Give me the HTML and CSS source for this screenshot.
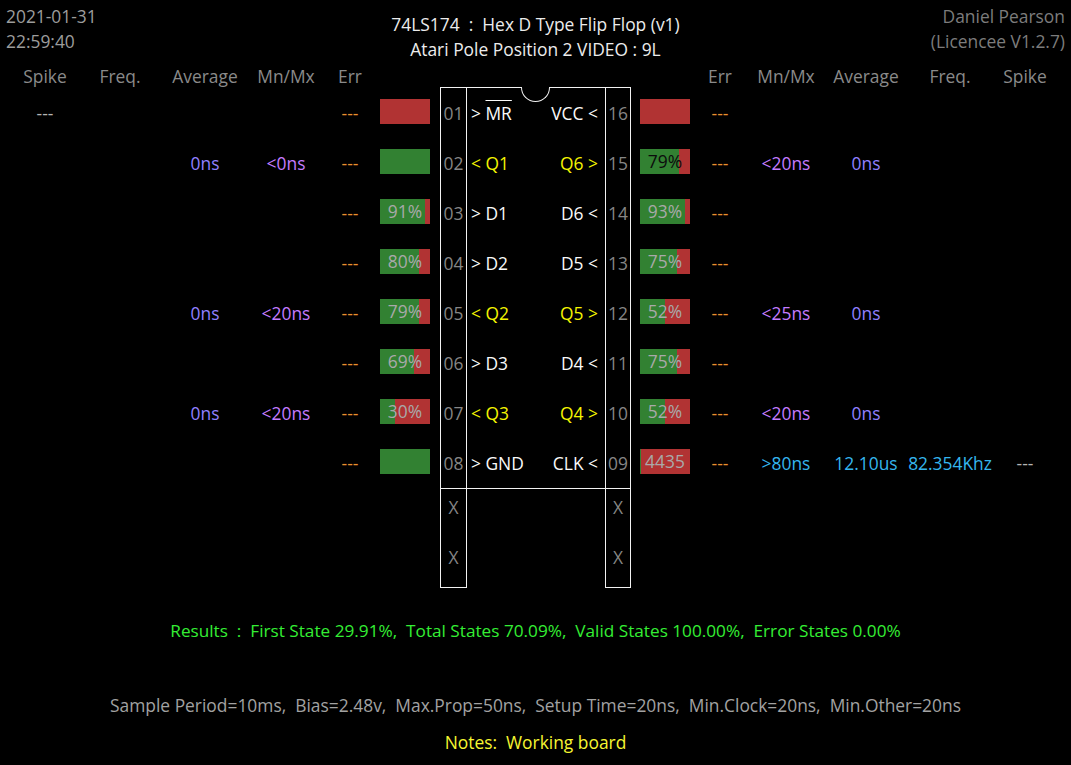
FILE: index.html
```html
<!DOCTYPE html>
<html>
<head>
<meta charset="utf-8">
<title>74LS174 Hex D Type Flip Flop</title>
<link rel="stylesheet" href="styles.css">
</head>
<body>
<div class="screen">
  <header class="top">
    <div class="stamp">2021-01-31<br>22:59:40</div>
    <div class="title">74LS174&nbsp; :&nbsp; Hex D Type Flip Flop (v1)<br>Atari Pole Position 2 VIDEO : 9L</div>
    <div class="owner">Daniel Pearson<br>(Licencee V1.2.7)</div>
  </header>

  <main class="board">
    <section class="side side-left">
      <div class="row head"><span>Spike</span><span>Freq.</span><span>Average</span><span>Mn/Mx</span><span class="err">Err</span><span></span></div>
      <div class="row"><span class="dim">---</span><span></span><span></span><span></span><span class="err warn">---</span><div class="bar"><span class="fill" style="width:0%"></span><span class="pct"></span></div></div>
      <div class="row"><span></span><span></span><span class="ns">0ns</span><span class="mm">&lt;0ns</span><span class="err warn">---</span><div class="bar"><span class="fill" style="width:100%"></span><span class="pct"></span></div></div>
      <div class="row"><span></span><span></span><span></span><span></span><span class="err warn">---</span><div class="bar"><span class="fill" style="width:90%"></span><span class="pct">91%</span></div></div>
      <div class="row"><span></span><span></span><span></span><span></span><span class="err warn">---</span><div class="bar"><span class="fill" style="width:78%"></span><span class="pct">80%</span></div></div>
      <div class="row"><span></span><span></span><span class="ns">0ns</span><span class="mm">&lt;20ns</span><span class="err warn">---</span><div class="bar"><span class="fill" style="width:78%"></span><span class="pct">79%</span></div></div>
      <div class="row"><span></span><span></span><span></span><span></span><span class="err warn">---</span><div class="bar"><span class="fill" style="width:68%"></span><span class="pct">69%</span></div></div>
      <div class="row"><span></span><span></span><span class="ns">0ns</span><span class="mm">&lt;20ns</span><span class="err warn">---</span><div class="bar"><span class="fill" style="width:30%"></span><span class="pct">30%</span></div></div>
      <div class="row"><span></span><span></span><span></span><span></span><span class="err warn">---</span><div class="bar"><span class="fill" style="width:100%"></span><span class="pct"></span></div></div>
    </section>

    <section class="chip">
      <div class="notch"></div>
      <div class="chip-body">
        <span class="pin">01</span><div class="labels"><span class="in">&gt; <span class="bar-over">MR</span></span><span class="in">VCC &lt;</span></div><span class="pin">16</span>
        <span class="pin">02</span><div class="labels"><span class="out">&lt; Q1</span><span class="out">Q6 &gt;</span></div><span class="pin">15</span>
        <span class="pin">03</span><div class="labels"><span class="in">&gt; D1</span><span class="in">D6 &lt;</span></div><span class="pin">14</span>
        <span class="pin">04</span><div class="labels"><span class="in">&gt; D2</span><span class="in">D5 &lt;</span></div><span class="pin">13</span>
        <span class="pin">05</span><div class="labels"><span class="out">&lt; Q2</span><span class="out">Q5 &gt;</span></div><span class="pin">12</span>
        <span class="pin">06</span><div class="labels"><span class="in">&gt; D3</span><span class="in">D4 &lt;</span></div><span class="pin">11</span>
        <span class="pin">07</span><div class="labels"><span class="out">&lt; Q3</span><span class="out">Q4 &gt;</span></div><span class="pin">10</span>
        <span class="pin">08</span><div class="labels"><span class="in">&gt; GND</span><span class="in">CLK &lt;</span></div><span class="pin">09</span>
      </div>
      <div class="legs">
        <div class="leg leg-left"><span>X</span><span>X</span></div>
        <div class="leg leg-right"><span>X</span><span>X</span></div>
      </div>
    </section>

    <section class="side side-right">
      <div class="row head"><span></span><span>Err</span><span>Mn/Mx</span><span>Average</span><span>Freq.</span><span>Spike</span></div>
      <div class="row"><div class="bar"><span class="fill" style="width:0%"></span><span class="pct"></span></div><span class="warn">---</span><span></span><span></span><span></span><span></span></div>
      <div class="row"><div class="bar"><span class="fill" style="width:78%"></span><span class="pct dark">79%</span></div><span class="warn">---</span><span class="mm">&lt;20ns</span><span class="ns">0ns</span><span></span><span></span></div>
      <div class="row"><div class="bar"><span class="fill" style="width:90%"></span><span class="pct">93%</span></div><span class="warn">---</span><span></span><span></span><span></span><span></span></div>
      <div class="row"><div class="bar"><span class="fill" style="width:74%"></span><span class="pct">75%</span></div><span class="warn">---</span><span></span><span></span><span></span><span></span></div>
      <div class="row"><div class="bar"><span class="fill" style="width:50%"></span><span class="pct">52%</span></div><span class="warn">---</span><span class="mm">&lt;25ns</span><span class="ns">0ns</span><span></span><span></span></div>
      <div class="row"><div class="bar"><span class="fill" style="width:74%"></span><span class="pct">75%</span></div><span class="warn">---</span><span></span><span></span><span></span><span></span></div>
      <div class="row"><div class="bar"><span class="fill" style="width:50%"></span><span class="pct">52%</span></div><span class="warn">---</span><span class="mm">&lt;20ns</span><span class="ns">0ns</span><span></span><span></span></div>
      <div class="row"><div class="bar"><span class="fill" style="width:2%"></span><span class="pct">4435</span></div><span class="warn">---</span><span class="cyan">&gt;80ns</span><span class="cyan">12.10us</span><span class="cyan">82.354Khz</span><span class="dim">---</span></div>
    </section>
  </main>

  <p class="results">Results&nbsp; :&nbsp; First State 29.91%,&nbsp; Total States 70.09%,&nbsp; Valid States 100.00%,&nbsp; Error States 0.00%</p>
  <p class="params">Sample Period=10ms,&nbsp; Bias=2.48v,&nbsp; Max.Prop=50ns,&nbsp; Setup Time=20ns,&nbsp; Min.Clock=20ns,&nbsp; Min.Other=20ns</p>
  <p class="notes">Notes:&nbsp; Working board</p>
</div>
</body>
</html>
```
FILE: styles.css
```css
html, body {
  margin: 0;
  padding: 0;
  background: #000;
}

.screen {
  width: 1071px;
  height: 765px;
  overflow: hidden;
  font-family: "Open Sans", "Noto Sans", sans-serif;
  font-size: 17.4px;
  color: #8a8a8a;
}

/* ---------- top header ---------- */
.top {
  display: grid;
  grid-template-columns: 1fr auto 1fr;
  height: 64px;
  line-height: 25px;
}
.stamp {
  padding: 4px 0 0 6px;
  color: #9c9c9c;
}
.title {
  padding-top: 12px;
  text-align: center;
  color: #ececec;
}
.owner {
  padding: 4px 6px 0 0;
  text-align: right;
  color: #7c7c7c;
}

/* ---------- board ---------- */
.board {
  display: flex;
  align-items: flex-start;
}

.side { display: flex; flex-direction: column; }

.row {
  display: grid;
  height: 50px;
  line-height: 50px;
  white-space: nowrap;
}
.row > span {
  text-align: center;
  justify-self: center;
}
.row.head {
  height: 24px;
  line-height: 24px;
  color: #8a8a8a;
}

.side-left .row { grid-template-columns: 90px 60px 110px 52px 68px 50px; }
.side-left .err { padding-left: 8px; }
.side-left { width: 430px; }

.side-right { width: 420px; }
.side-right .row { grid-template-columns: 50px 60px 72px 88px 80px 70px; }

.warn { color: #e8902e; }
.dim { color: #b4b4b4; }
.ns { color: #9180ff; }
.mm { color: #c47cff; }
.cyan { color: #35b6ee; }

/* ---------- bars ---------- */
.bar {
  display: grid;
  width: 50px;
  height: 25px;
  margin-top: 11px;
  background: #b13333;
  line-height: 25px;
}
.bar > .fill,
.bar > .pct { grid-area: 1 / 1; }
.fill {
  height: 25px;
  background: #328132;
}
.pct {
  text-align: center;
  color: #a9a9a9;
}
.pct.dark { color: #0c0c0c; }

/* ---------- chip ---------- */
.chip {
  position: relative;
  width: 191px;
  margin: 23px 9px 0 10px;
}
.notch {
  position: absolute;
  top: 0;
  left: 81px;
  width: 29px;
  height: 15px;
  box-sizing: border-box;
  border: 1px solid #f2f2f2;
  border-top: none;
  border-radius: 0 0 15px 15px;
  background: #000;
}
.chip-body {
  display: grid;
  grid-template-columns: 26px 1fr 25px;
  grid-auto-rows: 50px;
  border: 1px solid #f2f2f2;
  line-height: 50px;
}
.pin {
  color: #868686;
  text-align: center;
}
.chip-body .pin:nth-child(3n+1) { border-right: 1px solid #f2f2f2; }
.chip-body .pin:nth-child(3n) { border-left: 1px solid #f2f2f2; }
.labels {
  display: flex;
  justify-content: space-between;
  padding: 0 7px 0 4px;
  white-space: nowrap;
}
.in { color: #fafafa; }
.out { color: #f4f400; }
.bar-over {
  text-decoration: overline;
  text-decoration-thickness: 1px;
}

.legs {
  display: flex;
  justify-content: space-between;
}
.leg {
  display: flex;
  flex-direction: column;
  gap: 26px;
  box-sizing: border-box;
  padding: 6px 0 18px;
  border: 1px solid #f2f2f2;
  border-top: none;
  color: #868686;
  text-align: center;
  line-height: 24px;
}
.leg-left { width: 27px; }
.leg-right { width: 26px; }

/* ---------- footer lines ---------- */
.results, .params, .notes {
  margin: 0;
  text-align: center;
  line-height: 24px;
  white-space: nowrap;
}
.results {
  margin-top: 31px;
  font-size: 17.2px;
  color: #34ee34;
}
.params {
  margin-top: 50px;
  color: #a2a2a2;
}
.notes {
  margin-top: 13px;
  color: #f6f631;
}
```
